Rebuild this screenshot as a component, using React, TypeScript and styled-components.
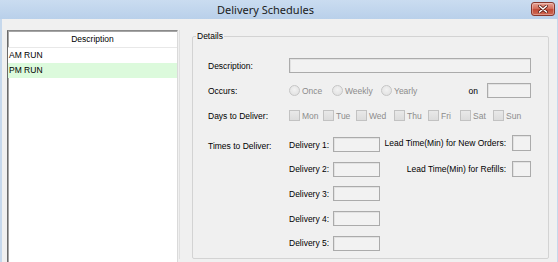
import * as React from 'react'
import styled, { createGlobalStyle } from 'styled-components'

const GlobalStyle = createGlobalStyle`
  html, body {
    margin: 0;
    padding: 0;
    background: #f0f0f0;
  }
  body {
    font-family: "Liberation Sans", Arial, sans-serif;
    font-size: 8.5px;
    color: #000;
  }
`

const Window = styled.div`
  width: 558px;
  height: 262px;
  display: flex;
  flex-direction: column;
  overflow: hidden;
  background: #c6d8ec;
`

const TitleBar = styled.div`
  height: 19px;
  display: flex;
  align-items: flex-start;
  padding-right: 3px;
  background: linear-gradient(#cadcf0, #b9d0ea);
`

const Title = styled.div`
  flex: 1;
  text-align: center;
  font-family: "Noto Sans", "Open Sans", sans-serif;
  font-size: 11px;
  line-height: 19px;
  color: #1b1b1b;
`

const CloseButton = styled.div`
  width: 24px;
  height: 14px;
  margin-top: 2px;
  box-sizing: border-box;
  border: 1px solid #86362b;
  border-radius: 3px;
  display: flex;
  align-items: center;
  justify-content: center;
  background: linear-gradient(#e8a597, #d5715f 45%, #c14a36 55%, #d06a55);
  box-shadow: inset 0 0 0 1px rgba(255, 255, 255, 0.3);
`

const Body = styled.div`
  flex: 1;
  display: flex;
  margin: 0 1px 0 2px;
  padding: 11px 8px 3px 5px;
  background: #f0f0f0;
  min-height: 0;
`

const List = styled.div`
  width: 171px;
  box-sizing: border-box;
  margin-bottom: -6px;
  background: #fff;
  border-left: 1px solid #6a6a6a;
  border-top: 1px solid #8a8a8a;
  border-right: 1px solid #dadada;
  box-shadow: inset 1px 1px 0 #a5a5a5;
`

const ListHeader = styled.div`
  height: 16px;
  line-height: 16px;
  text-align: center;
  border-bottom: 1px solid #e8e8e8;
`

const ListRow = styled.div<{ $selected?: boolean }>`
  height: 15px;
  line-height: 15px;
  padding-left: 1px;
  background: ${p => (p.$selected ? '#dcfadc' : '#fff')};
`

const Splitter = styled.div`
  width: 1px;
  margin: 0 12px 0 1px;
  background: #e0e0e0;
`

const GroupBox = styled.fieldset`
  flex: 1;
  margin: 0;
  padding: 0 17px 0 15px;
  border: 1px solid #d3d3d3;
  border-radius: 2px;
  min-width: 0;
`

const Legend = styled.legend`
  margin-left: -12px;
  padding: 0 1px;
  line-height: 12px;
`

const FormGrid = styled.div`
  display: grid;
  grid-template-columns: 81px 1fr;
  grid-template-rows: 15px 15px 15px auto;
  row-gap: 10px;
  align-items: center;
  padding-top: 16px;
`

const Label = styled.div<{ $top?: number }>`
  white-space: nowrap;
  align-self: ${p => (p.$top !== undefined ? 'start' : 'center')};
  padding-top: ${p => p.$top ?? 0}px;
`

const TextBox = styled.div<{ $w?: number; $h?: number }>`
  width: ${p => (p.$w ? `${p.$w}px` : '100%')};
  height: ${p => p.$h ?? 15}px;
  box-sizing: border-box;
  border: 1px solid #ababab;
  box-shadow: inset 1px 1px 0 #e2e2e2;
  background: #f2f2f2;
`

const Line = styled.div`
  display: flex;
  align-items: center;
`

const Option = styled.div<{ $w?: number }>`
  display: flex;
  align-items: center;
  gap: 2px;
  width: ${p => (p.$w ? `${p.$w}px` : 'auto')};
  color: #8c8c8c;
  white-space: nowrap;
`

const Radio = styled.span`
  width: 11px;
  height: 11px;
  box-sizing: border-box;
  border-radius: 50%;
  border: 1px solid #c6c6c6;
  background: radial-gradient(circle at 50% 40%, #f2f2f2, #dedede);
`

const Check = styled.span`
  width: 11px;
  height: 11px;
  box-sizing: border-box;
  border: 1px solid #c2c2c2;
  background: linear-gradient(#e9e9e9, #dcdcdc);
`

const OnGroup = styled.div`
  margin-left: auto;
  display: flex;
  align-items: center;
  gap: 9px;
`

const Times = styled.div`
  display: flex;
  align-items: flex-start;
`

const DeliveryCol = styled.div`
  display: grid;
  grid-template-columns: auto 47px;
  column-gap: 4px;
  row-gap: 9.7px;
  align-items: center;
  padding-top: 4px;
`

const LeadCol = styled.div`
  margin-left: auto;
  display: grid;
  grid-template-columns: auto 19px;
  column-gap: 6px;
  row-gap: 10px;
  align-items: center;
  justify-items: end;
  padding-top: 2px;
`

const days = [
  { d: 'Mon', w: 34 },
  { d: 'Tue', w: 33 },
  { d: 'Wed', w: 38 },
  { d: 'Thu', w: 34 },
  { d: 'Fri', w: 32 },
  { d: 'Sat', w: 33 },
  { d: 'Sun' },
]

export default function App() {
  return (
    <>
      <GlobalStyle />
      <Window>
        <TitleBar>
          <Title>Delivery Schedules</Title>
          <CloseButton>
            <svg width="10" height="8" viewBox="0 0 10 8">
              <path d="M1.5 1 L8.5 7 M8.5 1 L1.5 7" stroke="#5a1c14" strokeWidth="3" strokeLinecap="round" />
              <path d="M1.5 1 L8.5 7 M8.5 1 L1.5 7" stroke="#fff" strokeWidth="1.6" strokeLinecap="round" />
            </svg>
          </CloseButton>
        </TitleBar>
        <Body>
          <List>
            <ListHeader>Description</ListHeader>
            <ListRow>AM RUN</ListRow>
            <ListRow $selected>PM RUN</ListRow>
          </List>
          <Splitter />
          <GroupBox>
            <Legend>Details</Legend>
            <FormGrid>
              <Label>Description:</Label>
              <TextBox />

              <Label>Occurs:</Label>
              <Line>
                <Option $w={43}><Radio />Once</Option>
                <Option $w={49}><Radio />Weekly</Option>
                <Option><Radio />Yearly</Option>
                <OnGroup>
                  <span>on</span>
                  <TextBox $w={44} />
                </OnGroup>
              </Line>

              <Label>Days to Deliver:</Label>
              <Line>
                {days.map(x => (
                  <Option key={x.d} $w={x.w}><Check />{x.d}</Option>
                ))}
              </Line>

              <Label $top={8}>Times to Deliver:</Label>
              <Times>
                <DeliveryCol>
                  {[1, 2, 3, 4, 5].map(n => (
                    <React.Fragment key={n}>
                      <Label>Delivery {n}:</Label>
                      <TextBox $w={47} />
                    </React.Fragment>
                  ))}
                </DeliveryCol>
                <LeadCol>
                  <Label>Lead Time(Min) for New Orders:</Label>
                  <TextBox $w={19} $h={16} />
                  <Label>Lead Time(Min) for Refills:</Label>
                  <TextBox $w={19} $h={16} />
                </LeadCol>
              </Times>
            </FormGrid>
          </GroupBox>
        </Body>
      </Window>
    </>
  )
}
